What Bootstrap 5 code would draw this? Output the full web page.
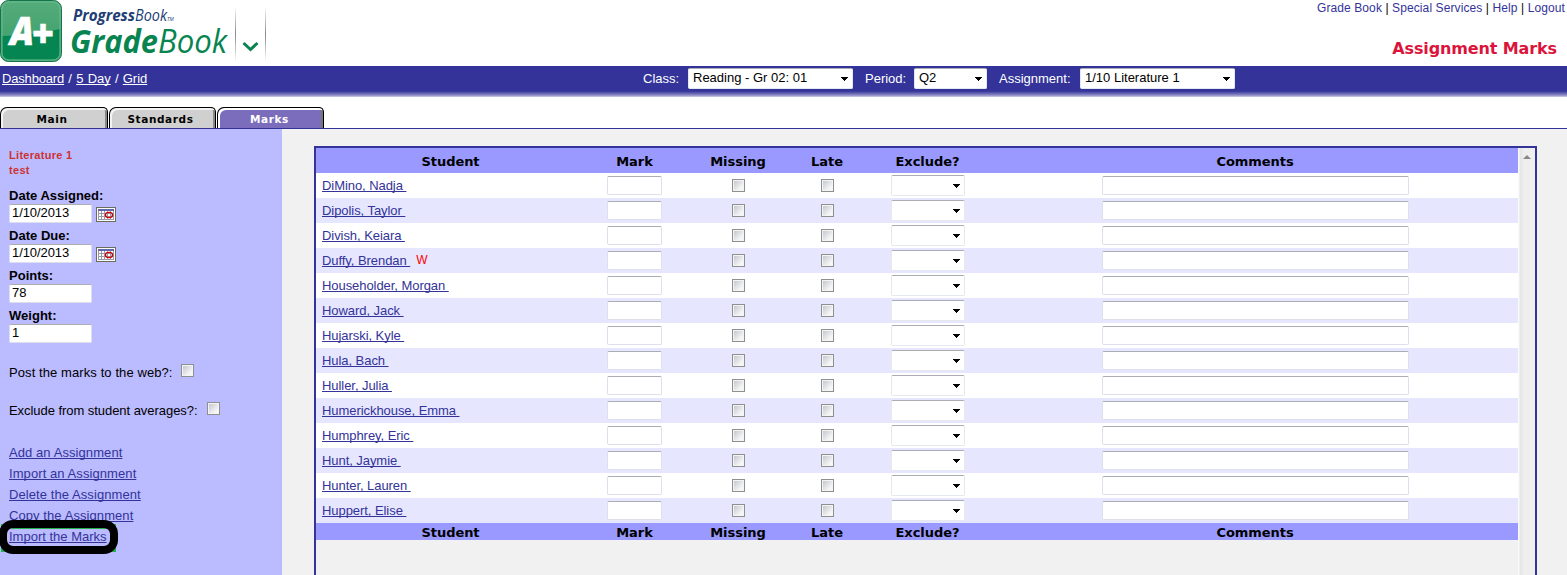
<!DOCTYPE html>
<html lang="en">
<head>
<meta charset="utf-8">
<title>GradeBook - Assignment Marks</title>
<link href="https://cdn.jsdelivr.net/npm/bootstrap@5.3.0/dist/css/bootstrap.min.css" rel="stylesheet">
<style>
body{font:13px/16px "Liberation Sans",Arial,sans-serif;color:#000;background:#fff;height:575px;overflow:hidden}
a{color:#339;text-decoration-skip-ink:none}
.top-bar{height:66px}
.quick-links{font-size:12px;line-height:15px;padding:1px 2px 0 0;letter-spacing:.1px}
.quick-links a{text-decoration:none}
.page-title{font:bold 16px/20px "DejaVu Sans",Verdana,sans-serif;color:#dc143c;margin:23px 10px 0 0;letter-spacing:-.12px}
.blue-bar{height:31px;background:linear-gradient(#339 0 25px,#4747a3 26px,#7171b8 28px,#a5a5d2 30px,#d4d4ea 31px);color:#fff;padding-left:2px}
.crumbs{width:641px;line-height:25px;letter-spacing:-.04px;word-spacing:.7px}
.crumbs a{color:#fff}
.crumbs a:first-child{letter-spacing:-.17px}
.picks{line-height:25px}
.pick{appearance:none;border:1px solid #e3e9ef;border-top-color:#abadb3;border-radius:2px;background:#fff url("data:image/svg+xml,%3Csvg xmlns='http://www.w3.org/2000/svg' width='7' height='4'%3E%3Cpath d='M0 0h7v1H6v1H5v1H4v1H3V3H2V2H1V1H0z'/%3E%3C/svg%3E") no-repeat right 4px center;color:#000;padding:0 4px;outline:0}
.blue-bar .pick{height:21px;margin-top:2px;line-height:17px;padding-bottom:2px;background-position:right 4px top 8px}
.w-class{width:165px}.w-period{width:73px}.w-assign{width:155px}
.lb-class{width:45px}.lb-period{width:61px;padding-left:12px}.lb-assign{width:93px;padding-left:12px}
.tab-strip{height:32px;border-bottom:1px solid #339;padding-top:10px;gap:1px}
.tab-item{width:108px;height:21px;background:#d0d0d0;border:1px solid #000;border-bottom:0;border-radius:7px 5px 0 0;box-shadow:inset 2px 2px #f3f3f3,inset -2px 0 #888;font:bold 10.500px/23px "DejaVu Sans",Verdana,sans-serif;text-align:center;letter-spacing:.6px;padding-right:4px;text-decoration:none;color:#000}
.tab-item:nth-child(2){width:107px}
.tab-item.on{background:#7b6dbc;color:#fff;box-shadow:inset 2px 2px #fff,inset -2px 0 #777;width:107px;padding-right:2px}
.work{height:446px;background:#f1f1f1}
.side{width:282px;background:#bbf;padding:19px 0 0 9px;position:relative}
.asg-name{font:bold 11px/15px "Liberation Sans",Arial,sans-serif;color:#c33;letter-spacing:.3px;height:37px}
.side label{font-weight:bold;height:19px;line-height:22px;display:block;letter-spacing:.02px}
.field{height:21px;gap:4px}
.field svg{margin-top:1px}
.box{height:19px;border:1px solid #dde0ea;border-top-color:#abadb3;border-radius:2px;background:#fff;padding:0 2px 2px;font-size:13px;line-height:16px;outline:0;display:block;color:#000;letter-spacing:-.08px}
.side .box{width:83px}
.opt{height:38px;line-height:16px;gap:8px;letter-spacing:.09px}
.opt + .opt{letter-spacing:-.05px;gap:9px}
.opt .tick{position:relative;top:-1px}
.tick{appearance:none;display:block;width:13px;height:13px;margin:0;border:1px solid #8e8f8f;background:linear-gradient(135deg,#c4c8cf,#f6f6f6 80%) center/9px 9px no-repeat,#f4f4f4;box-shadow:inset 0 0 0 1px #f4f4f4}
.acts{padding-top:5px}
.acts a{display:block;line-height:21px;height:21px;width:max-content;letter-spacing:.08px}
.acts a:last-child{letter-spacing:0}
.ring{position:absolute;left:0;top:390px}
.pane{width:1223px;margin:17px 0 0 32px;border:2px solid #339;border-bottom:0}
.marks-table{width:1202px;table-layout:fixed;border-collapse:collapse}
.marks-table th{background:#99f;text-align:center;font:bold 13px/15px "DejaVu Sans",Verdana,sans-serif;height:17px;padding:2px 0 0;letter-spacing:-.05px}
.marks-table thead th{height:25px}
.marks-table td{height:25px;padding:0}
.marks-table td:first-child{padding-left:6px;letter-spacing:-.06px}
.marks-table td:last-child,.marks-table th:last-child{padding-right:1px}
.marks-table tbody tr{background:#fff}
.marks-table tbody tr:nth-child(even){background:#e6e6ff}
.marks-table .box,.marks-table .tick,.marks-table .pick{margin:0 auto;display:block}
.marks-table .pick{width:74px;height:21px}
.mk{width:55px}.cm{width:307px}
.wd{color:red;margin-left:6px;font-size:12px;position:relative;top:-1px}
.scroller{width:17px;background:linear-gradient(90deg,#fafafa 1px,#e4e4e4 2px,#eee 6px,#efefef)}
</style>
</head>
<body>
<header class="top-bar d-flex justify-content-between">
<svg width="280" height="66" viewBox="0 0 280 66">
<defs><linearGradient id="lg" x2="0" y2="1"><stop stop-color="#55ac7b"/><stop offset=".53" stop-color="#45a471"/><stop offset="1" stop-color="#45a471"/></linearGradient>
<linearGradient id="ln" x2="0" y2="1"><stop stop-color="#fff"/><stop offset=".5" stop-color="#888"/><stop offset="1" stop-color="#fff"/></linearGradient></defs>
<rect x=".5" y=".5" width="61" height="61" rx="8" fill="url(#lg)" stroke="#17734a"/>
<path d="M2 36Q30 36 60 29V53Q60 60 53 60H9Q2 60 2 53Z" fill="#058551"/>
<rect x="2" y="2" width="58" height="58" rx="7" fill="none" stroke="#6abc91"/>
<g font-family="Open Sans" font-weight="800" font-style="italic" fill="#fff" stroke="#fff" stroke-width=".6"><text x="10" y="44.500" font-size="38" textLength="24" lengthAdjust="spacingAndGlyphs">A</text><text x="32" y="47" font-size="39" textLength="22" lengthAdjust="spacingAndGlyphs">+</text></g>
<g font-family="Open Sans" font-style="italic" fill="#213d75"><text x="73" y="20.500" font-size="16.500"><tspan font-weight="700" textLength="62" lengthAdjust="spacingAndGlyphs">Progress</tspan><tspan textLength="32" lengthAdjust="spacingAndGlyphs">Book</tspan><tspan font-size="5">TM</tspan></text></g>
<text x="70" y="52.500" font-family="Open Sans" font-style="italic" font-size="33" fill="#078450"><tspan font-weight="700" textLength="88" lengthAdjust="spacingAndGlyphs">Grade</tspan><tspan textLength="69" lengthAdjust="spacingAndGlyphs">Book</tspan></text>
<rect x="235" y="6" width="1" height="56" fill="url(#ln)"/><rect x="265" y="6" width="1" height="56" fill="url(#ln)"/>
<path d="M243.500 43l7 6.500 7-6.500" fill="none" stroke="#078450" stroke-width="3"/>
</svg>
<div class="text-end">
<div class="quick-links"><a href="#">Grade Book</a> | <a href="#">Special Services</a> | <a href="#">Help</a> | <a href="#">Logout</a></div>
<h1 class="page-title">Assignment Marks</h1>
</div>
</header>
<nav class="blue-bar d-flex align-items-start">
<div class="crumbs"><a href="#">Dashboard</a> / <a href="#">5 Day</a> / <a href="#">Grid</a></div>
<div class="picks d-flex"><span class="lb-class">Class:</span><select class="pick w-class"><option>Reading - Gr 02: 01</option></select><span class="lb-period">Period:</span><select class="pick w-period"><option>Q2</option></select><span class="lb-assign">Assignment:</span><select class="pick w-assign"><option>1/10 Literature 1</option></select></div>
</nav>
<div class="tab-strip d-flex"><a class="tab-item" href="#">Main</a><a class="tab-item" href="#">Standards</a><a class="tab-item on" href="#">Marks</a></div>
<main class="work d-flex">
<aside class="side flex-shrink-0">
<div class="asg-name">Literature 1<br>test</div>
<label>Date Assigned:</label><div class="field d-flex"><input class="box" value="1/10/2013"><svg width="20" height="17"><use href="#cal"/></svg></div>
<label>Date Due:</label><div class="field d-flex"><input class="box" value="1/10/2013"><svg width="20" height="17"><use href="#cal"/></svg></div>
<label>Points:</label><div class="field"><input class="box" value="78"></div>
<label>Weight:</label><div class="field"><input class="box" value="1"></div>
<div class="opt d-flex mt-3 pt-1"><span>Post the marks to the web?:</span><input type="checkbox" class="tick"></div>
<div class="opt d-flex pt-1"><span>Exclude from student averages?:</span><input type="checkbox" class="tick"></div>
<div class="acts"><a href="#">Add an Assignment</a><a href="#">Import an Assignment</a><a href="#">Delete the Assignment</a><a href="#">Copy the Assignment</a><a href="#">Import the Marks</a></div>
<svg class="ring" width="120" height="36"><path d="M1 5H10V10H1zM106 5H116V10H106zM1 27H10V33H1zM106 27H116V33H106zM12 8H106V10H12z" fill="#22b14c"/><rect x="3" y="5" width="111" height="26" rx="10" fill="none" stroke="#000" stroke-width="8"/></svg>
</aside>
<section class="pane d-flex justify-content-between flex-shrink-0">
<div><table class="marks-table">
<colgroup><col width="269"><col width="99"><col width="108"><col width="70"><col width="131"><col width="525"></colgroup>
<thead><tr><th>Student</th><th>Mark</th><th>Missing</th><th>Late</th><th>Exclude?</th><th>Comments</th></tr></thead>
<tbody id="roster"></tbody>
<tfoot><tr><th>Student</th><th>Mark</th><th>Missing</th><th>Late</th><th>Exclude?</th><th>Comments</th></tr></tfoot>
</table></div>
<div class="scroller"><svg class="d-block" width="17" height="20"><path d="M5 11L9 7l4 4z" fill="#888"/></svg></div>
</section>
</main>
<svg width="0" height="0"><defs><g id="cal" shape-rendering="crispEdges"><rect x=".5" y="2.500" width="19" height="14" fill="#fff" stroke="#6b6b5e"/><path d="M2 4h16v2H2z" fill="#6464a8"/><path d="M2.500 6v9M5.500 6v9M8.500 6v9M11.500 6v9M14.500 6v9M17.500 6v9M2 8.500h16M2 11.500h16M2 14.500h16" stroke="#999aa8"/><ellipse cx="13" cy="10" rx="3.500" ry="2.600" fill="none" stroke="#c00" stroke-width="1.400" shape-rendering="auto"/></g></defs></svg>
<script>
const names=["DiMino, Nadja","Dipolis, Taylor","Divish, Keiara","Duffy, Brendan","Householder, Morgan","Howard, Jack","Hujarski, Kyle","Hula, Bach","Huller, Julia","Humerickhouse, Emma","Humphrey, Eric","Hunt, Jaymie","Hunter, Lauren","Huppert, Elise"];
document.getElementById("roster").innerHTML=names.map(n=>`<tr><td><a href="#">${n}&nbsp;</a>${n=="Duffy, Brendan"?'<span class="wd">W</span>':''}</td><td><input class="box mk"></td><td><input type="checkbox" class="tick"></td><td><input type="checkbox" class="tick"></td><td><select class="pick"><option></option></select></td><td><input class="box cm"></td></tr>`).join("");
</script>
<script src="https://cdn.jsdelivr.net/npm/bootstrap@5.3.0/dist/js/bootstrap.bundle.min.js"></script>
</body>
</html>
